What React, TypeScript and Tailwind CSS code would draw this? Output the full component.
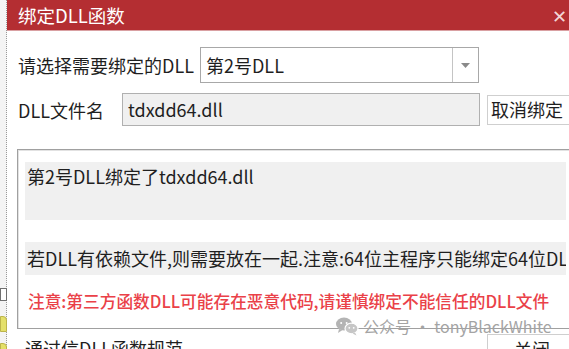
import React from 'react';

const font = { fontFamily: '"Noto Sans CJK SC", "Noto Sans", sans-serif' };

const WeChatMark = () => (
  <svg width="24" height="20" viewBox="0 0 24 20" fill="none">
    <ellipse cx="9" cy="8" rx="8" ry="6.5" fill="#b4b4b4" />
    <path d="M4 13 L3 17 L7.5 14 Z" fill="#b4b4b4" />
    <ellipse cx="16.5" cy="12.5" rx="6.5" ry="5.3" fill="#c6c6c6" stroke="#fff" strokeWidth="1.2" />
    <path d="M20 16.5 L21.5 19.5 L17.5 17.5 Z" fill="#c6c6c6" />
    <circle cx="6.2" cy="7" r="1" fill="#fff" />
    <circle cx="11.6" cy="7" r="1" fill="#fff" />
    <circle cx="14.3" cy="11.8" r="0.9" fill="#fff" />
    <circle cx="18.7" cy="11.8" r="0.9" fill="#fff" />
  </svg>
);

export default function App() {
  return (
    <div className="relative flex w-[569px] h-[349px] overflow-hidden bg-white" style={font}>
      {/* background window edge */}
      <div className="flex flex-col w-[7px] shrink-0 bg-[#f4f4f4] border-r border-dotted border-[#9a9a9a]">
        <div className="h-[288px] shrink-0" />
        <div className="w-[7px] h-[13px] shrink-0 border border-[#707070] bg-white" />
        <div className="h-[15px] shrink-0" />
        <div className="w-[7px] h-[16px] shrink-0 rounded-tr-sm bg-[#e4e06a] border border-[#bdb54a]" />
        <div className="h-[11px] shrink-0" />
        <div className="w-[7px] h-[8px] shrink-0 rounded-tr-sm bg-[#e4e06a] border border-[#bdb54a]" />
      </div>

      {/* dialog */}
      <div className="flex flex-col w-[600px] shrink-0">
        <div className="flex shrink-0 items-center justify-between h-[31px] bg-[#b42e32] border-b border-[#d9a0a2] pl-[11px] pr-[40px]">
          <span className="text-[18.5px] text-white leading-none">绑定DLL函数</span>
          <span className="text-[18px] text-[#f3d6d6] leading-none font-light">✕</span>
        </div>

        <div className="flex shrink-0 flex-col pl-[10px] text-[#1f1f1f]">
          <div className="flex shrink-0 items-center h-[36px] mt-[16px] ml-[1px]">
            <span className="w-[182px] text-[18px] leading-none">请选择需要绑定的DLL</span>
            <div className="flex w-[279px] h-[36px] border border-[#a8a8a8] bg-white">
              <span className="flex-1 flex items-center pl-[5px] text-[18px]">第2号DLL</span>
              <div className="flex items-center justify-center w-[26px] border-l border-[#c4c4c4]">
                <svg width="9" height="5" viewBox="0 0 9 5">
                  <path d="M0 0 H9 L4.5 5 Z" fill="#8a8a8a" />
                </svg>
              </div>
            </div>
          </div>

          <div className="flex shrink-0 items-center h-[33px] mt-[10px] ml-[1px]">
            <span className="w-[104px] text-[18px] leading-none">DLL文件名</span>
            <div className="flex items-center w-[358px] h-[33px] border border-[#b0b0b0] bg-[#f0f0f0] pl-[5px] text-[18px]">
              tdxdd64.dll
            </div>
            <div className="flex items-center justify-start ml-[7px] w-[90px] h-[30px] border border-[#cfcfcf] bg-white text-[18px] pl-[3px]">
              取消绑定
            </div>
          </div>

          <div className="flex shrink-0 flex-col w-[557px] h-[180px] mt-[23px] border border-[#a0a0a0] shadow-[inset_1px_1px_0_#e2e2e2] px-[7px] pt-[12px]">
            <div className="h-[58px] shrink-0 bg-[#f0f0f0] px-[2px] pt-[1px] text-[18px]">第2号DLL绑定了tdxdd64.dll</div>
            <div className="flex shrink-0 items-center h-[33px] mt-[22px] bg-[#f0f0f0] px-[2px] text-[18px] whitespace-nowrap overflow-hidden">
              若DLL有依赖文件,则需要放在一起.注意:64位主程序只能绑定64位DLL
            </div>
            <div className="mt-[16px] px-[3px] text-[16.7px] leading-[20px] font-medium text-[#ea4148] whitespace-nowrap">
              注意:第三方函数DLL可能存在恶意代码,请谨慎绑定不能信任的DLL文件
            </div>
          </div>

          <div className="flex shrink-0 items-start justify-between mt-[5px] w-[560px]">
            <span className="mt-[2px] ml-[8px] text-[18px] leading-[24px]">通过信DLL函数规范</span>
            <div className="flex items-center justify-center w-[90px] h-[30px] border border-[#cfcfcf] bg-white text-[18px]">
              关闭
            </div>
          </div>
        </div>
      </div>

      {/* watermark */}
      <div className="absolute left-[335px] top-[314px] flex items-center gap-[4px] text-[16px] text-[#a4a4a4]">
        <WeChatMark />
        <span>公众号 · tonyBlackWhite</span>
      </div>
    </div>
  );
}
